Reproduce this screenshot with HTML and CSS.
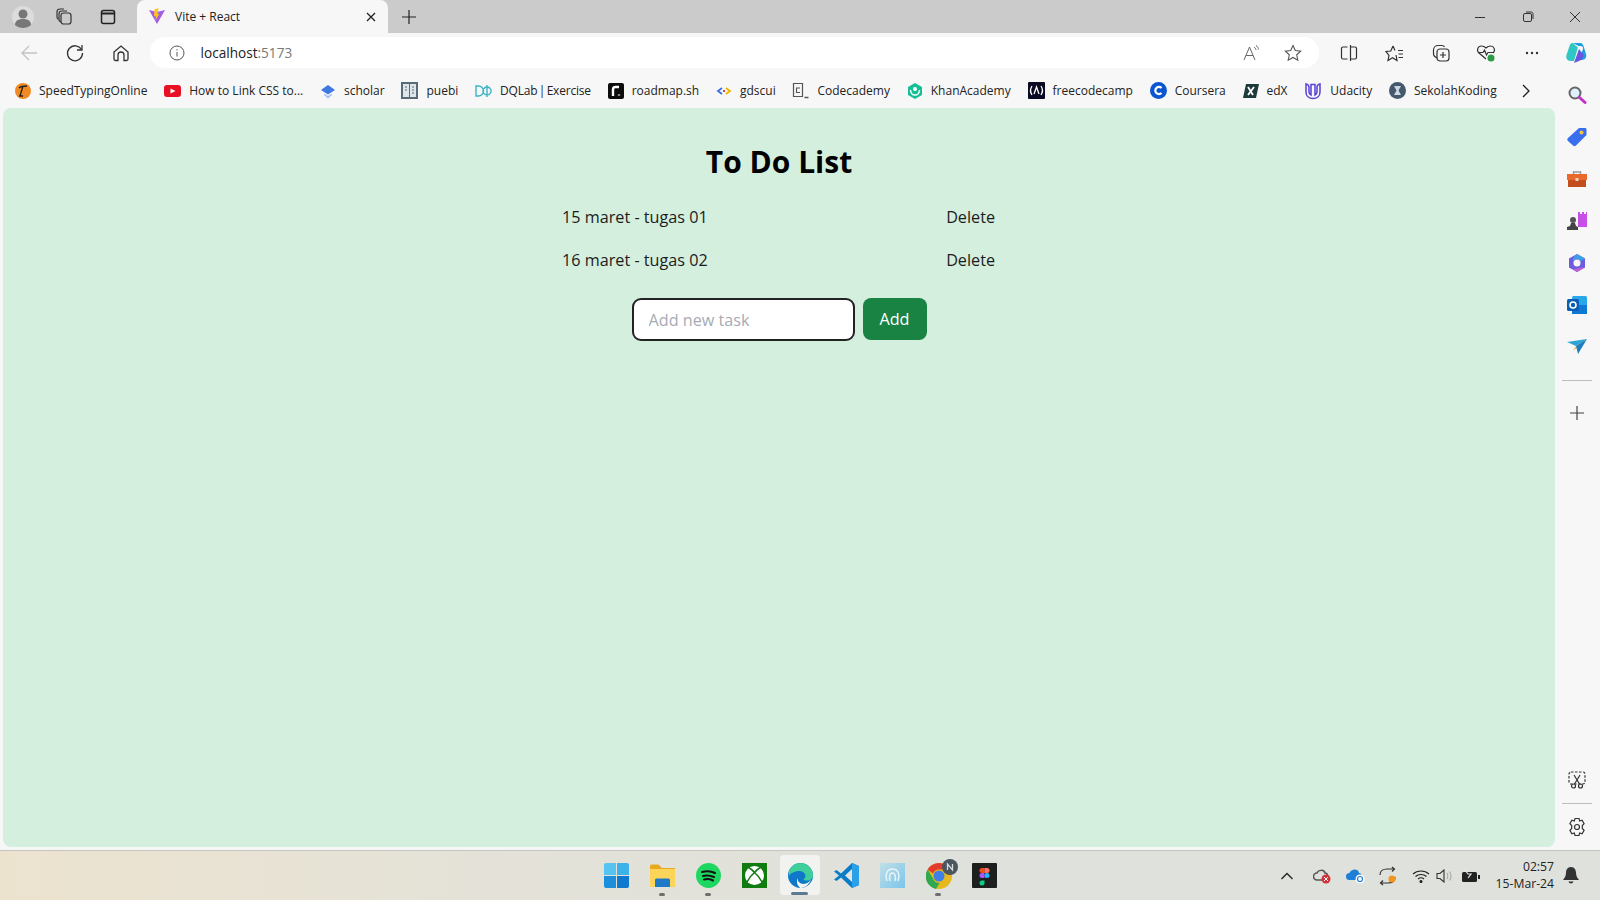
FILE: index.html
```html
<!DOCTYPE html>
<html lang="en">
<head>
<meta charset="utf-8">
<title>Vite + React</title>
<link rel="stylesheet" href="styles.css">
</head>
<body>
<div class="tabstrip">
  <div class="strip-left">
    <span class="profile"><svg width="22" height="22" viewBox="0 0 22 22"><circle cx="11" cy="11" r="11" fill="#dcdcdc"/><circle cx="11" cy="8" r="4.5" fill="#777"/><path d="M3 19c0-4 3-6 8-6s8 2 8 6c-2 2-5 3-8 3s-6-1-8-3z" fill="#777"/></svg></span>
    <span class="strip-btn"><svg width="20" height="20" viewBox="0 0 20 20" fill="none" stroke="#333" stroke-width="1.2"><rect x="7" y="6" width="10" height="11" rx="2.5"/><path d="M7 15c-1.500-.5-2-1-2-2V7c0-2 1-3 3-3h5"/><path d="M4.500 12.500C3.500 12 3 11 3 10V5c0-2 1-3 3-3h4"/></svg></span>
    <span class="strip-btn"><svg width="18" height="18" viewBox="0 0 18 18" fill="none" stroke="#222" stroke-width="1.500"><rect x="2.500" y="2.500" width="13" height="13" rx="2"/><path d="M2.500 5.500h13" stroke-width="2"/></svg></span>
  </div>
  <div class="tab">
    <svg class="tab-icon" width="18" height="17" viewBox="0 0 18 17"><path d="M1 2l8 14 8-14-8 2z" fill="#a45ce8"/><path d="M10.500 0L6.500 1.500 6 8l2 .5-.5 4 4-7-2 .5z" fill="#ffc51f"/></svg>
    <span class="tab-title">Vite + React</span>
    <svg class="tab-close" width="10" height="10" viewBox="0 0 10 10" stroke="#222" stroke-width="1.300"><path d="M1 1l8 8M9 1l-8 8"/></svg>
  </div>
  <span class="newtab"><svg width="16" height="16" viewBox="0 0 16 16" stroke="#222" stroke-width="1.200"><path d="M8 1v14M1 8h14"/></svg></span>
  <div class="win-controls">
    <svg width="12" height="12" viewBox="0 0 12 12" stroke="#333"><path d="M1 6.500h10"/></svg>
    <svg width="12" height="12" viewBox="0 0 12 12" fill="none" stroke="#333"><rect x="1.500" y="2.500" width="8" height="8" rx="1.500"/><path d="M4 1h5c1.500 0 2 1 2 2v5"/></svg>
    <svg width="12" height="12" viewBox="0 0 12 12" stroke="#333"><path d="M1 1l10 10M11 1L1 11"/></svg>
  </div>
</div>

<div class="toolbar">
  <span class="tool-btn"><svg width="20" height="20" viewBox="0 0 20 20" fill="none" stroke="#c4c4c4" stroke-width="1.400"><path d="M18 10H3M10 3l-7 7 7 7"/></svg></span>
  <span class="tool-btn"><svg width="20" height="20" viewBox="0 0 20 20" fill="none" stroke="#333" stroke-width="1.300"><path d="M16.500 6.500A7.500 7.500 0 1 0 17.500 10"/><path d="M17 2v5h-5"/></svg></span>
  <span class="tool-btn"><svg width="20" height="20" viewBox="0 0 20 20" fill="none" stroke="#333" stroke-width="1.300"><path d="M3 9l7-6 7 6v7a1.500 1.500 0 0 1-1.500 1.500H13V12a3 3 0 0 0-6 0v5.500H4.500A1.500 1.500 0 0 1 3 16z"/></svg></span>
  <div class="address">
    <svg width="16" height="16" viewBox="0 0 16 16" fill="none" stroke="#555"><circle cx="8" cy="8" r="7"/><path d="M8 7v4.500M8 4.200v1.300"/></svg>
    <span class="url">localhost<span class="port">:5173</span></span>
    <span class="addr-end">
      <svg width="18" height="18" viewBox="0 0 18 18" fill="none" stroke="#666"><path d="M1 16L6.500 3 12 16M3 11.500h7"/><path d="M11 3c1 .5 2 2 2 3M13 1.500c1.500 1 2.500 2.500 2.500 4"/></svg>
      <svg width="18" height="18" viewBox="0 0 18 18" fill="none" stroke="#555" stroke-width="1.100"><path d="M9 1.500l2.300 5 5.400.6-4 3.700 1.100 5.400L9 13.500l-4.800 2.700 1.100-5.400-4-3.700 5.400-.6z"/></svg>
    </span>
  </div>
  <span class="tool-btn tb-first"><svg width="18" height="18" viewBox="0 0 18 18" fill="none" stroke="#333" stroke-width="1.200"><path d="M7.500 3H3a1.500 1.500 0 0 0-1.500 1.500v9A1.500 1.500 0 0 0 3 15h4.500M10.500 1v16M10.500 3H15a1.500 1.500 0 0 1 1.500 1.500v9A1.500 1.500 0 0 1 15 15h-4.500"/></svg></span>
  <span class="tool-btn"><svg width="19" height="18" viewBox="0 0 19 18" fill="none" stroke="#333" stroke-width="1.200"><path d="M8 2l-2.200 5L1 7.500l3 3.800-1 5.200 4.500-2.700 4.500 2.700-1-5.500M8 2l2 4.500M13 6.500h5M13.500 10h4.500M13.500 13.500H18"/></svg></span>
  <span class="tool-btn"><svg width="18" height="18" viewBox="0 0 18 18" fill="none" stroke="#333" stroke-width="1.200"><rect x="5" y="5" width="12" height="12" rx="3"/><path d="M5 14c-2-1-3.500-2-3.500-4V6c0-2.500 2-4.500 4.500-4.500h4c1 0 2 .5 2.500 1.500M11 8v6M8 11h6"/></svg></span>
  <span class="tool-btn"><svg width="20" height="18" viewBox="0 0 20 18" fill="none" stroke="#333" stroke-width="1.200"><path d="M10 15L3 9C0 6 2 2 5.500 2 8 2 9 3 10 4c1-1 2-2 4.500-2C18 2 20 6 17 9"/><path d="M2 8.500h5l1.500-2.500 2 5 1.500-2.500h5"/><circle cx="15" cy="14" r="3.500" fill="#2c9b45" stroke="none"/></svg></span>
  <span class="tool-btn"><svg width="14" height="4" viewBox="0 0 14 4" fill="#333"><circle cx="2" cy="2" r="1.200"/><circle cx="7" cy="2" r="1.200"/><circle cx="12" cy="2" r="1.200"/></svg></span>
  <span class="tool-btn copilot"><svg width="24" height="24" viewBox="0 0 24 24"><path d="M8 2h7c2 0 3 1 3.500 3L21 13c1 3-1 6-4 6h-3l4-11c.6-2-1-3-2-3l-2.500 0z" fill="#1c9de0"/><path d="M8 2C6 2 5 3 4.500 5L1.500 14c-1 3 1 6 4 6H9l3.500-12c.5-2-.5-3-1.500-3z" fill="#2fc6c4"/><path d="M9 22l5-14 4 5c1 3-1 6-4 7z" fill="#6a55e0"/></svg></span>
</div>

<div class="workarea">
  <div class="browser-main">
    <div class="bookmarks">
      <span class="bm"><svg width="16" height="16" viewBox="0 0 16 16"><circle cx="8" cy="8" r="8" fill="#f08a24"/><path d="M5 13l3-10M4 5c2-2 6-2 8-2M4 13h4" stroke="#222" stroke-width="1.300" fill="none"/></svg>SpeedTypingOnline</span>
      <span class="bm"><svg width="17" height="16" viewBox="0 0 17 16"><rect y="2" width="17" height="12" rx="3" fill="#e81123"/><path d="M6.500 5.500v5L11.500 8z" fill="#fff"/></svg>How to Link CSS to...</span>
      <span class="bm"><svg width="16" height="16" viewBox="0 0 16 16"><path d="M8 2l7 5-7 4.500L1 7z" fill="#3f78e0"/><path d="M4 10.500l4 2.500 4-2.500V12l-4 3.500L4 12z" fill="#9cc0f5"/></svg>scholar</span>
      <span class="bm"><svg width="17" height="17" viewBox="0 0 17 17"><rect width="17" height="17" fill="#5a6b78"/><rect x="2" y="2" width="6" height="13" fill="#dfe6ea"/><rect x="9" y="2" width="6" height="13" fill="#dfe6ea"/><path d="M4 5h2M4 8h2M11 5h2M11 8h2M11 11h2" stroke="#5a6b78" stroke-width="1.200"/></svg>puebi</span>
      <span class="bm bm-tight"><svg width="17" height="14" viewBox="0 0 17 14" fill="none" stroke="#3bb4c4" stroke-width="1.400"><path d="M1 2h2.500a5 5 0 0 1 0 10H1zM12 3a4 4 0 1 0 0.100 0zM12 1v12"/></svg>DQLab | Exercise</span>
      <span class="bm"><svg width="16" height="16" viewBox="0 0 16 16"><rect width="16" height="16" rx="2" fill="#0c0c0c"/><path d="M5 13V6.500C5 5 6 4 7.500 4H11M11 11.500v1" stroke="#fff" stroke-width="2.400" fill="none"/></svg>roadmap.sh</span>
      <span class="bm"><svg width="16" height="16" viewBox="0 0 16 16" fill="none" stroke-width="1.800"><path d="M6 5L2 8l4 3" stroke="#3b6fe0"/><path d="M10 5l4 3-4 3" stroke="#f0b400"/><path d="M7 8h2" stroke="#e04030"/></svg>gdscui</span>
      <span class="bm"><svg width="17" height="17" viewBox="0 0 17 17" fill="none" stroke="#555" stroke-width="1.200"><path d="M1.500 1.500h9v13h-9z"/><path d="M8 6H4.500v4.500H8" stroke-width="1.100"/><path d="M12.500 15.500h4" stroke-width="1.500"/></svg>Codecademy</span>
      <span class="bm"><svg width="16" height="16" viewBox="0 0 16 16"><path d="M8 0l7 4v8l-7 4-7-4V4z" fill="#14bf96"/><circle cx="8" cy="6" r="2" fill="#fff"/><path d="M3.500 7c0 3 2 5 4.500 5s4.500-2 4.500-5" fill="none" stroke="#fff" stroke-width="1.500"/></svg>KhanAcademy</span>
      <span class="bm"><svg width="17" height="17" viewBox="0 0 17 17"><rect width="17" height="17" rx="1" fill="#0a0a23"/><path d="M4 4C2 7 2 10 4 13M13 4c2 3 2 6 0 9M6 12l2.500-7L11 12" stroke="#fff" stroke-width="1.300" fill="none"/></svg>freecodecamp</span>
      <span class="bm"><svg width="17" height="17" viewBox="0 0 17 17"><circle cx="8.500" cy="8.500" r="8.500" fill="#0a56d2"/><path d="M11.500 6a3.600 3.600 0 1 0 0 5" stroke="#fff" stroke-width="2.200" fill="none"/></svg>Coursera</span>
      <span class="bm"><svg width="16" height="16" viewBox="0 0 16 16"><path d="M3 1h13l-3 14H0z" fill="#1d3b3b"/><path d="M5 4l5 8M11 4L5 12" stroke="#fff" stroke-width="1.800"/></svg>edX</span>
      <span class="bm"><svg width="18" height="18" viewBox="0 0 18 18" fill="none" stroke="#5a3fd8" stroke-width="1.500"><path d="M2 2v8c0 4 3 6.500 7 6.500s7-2.500 7-6.500V2c-2 .5-3 1-3 3v5c0 1.500-1 2.500-2 3V2.500H7V13c-1-.5-2-1.500-2-3V5c0-2-1-2.500-3-3z"/></svg>Udacity</span>
      <span class="bm"><svg width="17" height="17" viewBox="0 0 17 17"><circle cx="8.500" cy="8.500" r="8.500" fill="#44596e"/><path d="M5 4h7l-2.500 4.500L12 13H5l2.500-4.500z" fill="#cfd8e0"/></svg>SekolahKoding</span>
      <span class="bm-more"><svg width="10" height="14" viewBox="0 0 10 14" fill="none" stroke="#222" stroke-width="1.300"><path d="M2 1l6 6-6 6"/></svg></span>
    </div>
    <main class="page">
      <h1 class="page-title">To Do List</h1>
      <ul class="tasks">
        <li class="task"><span>15 maret - tugas 01</span><span class="delete">Delete</span></li>
        <li class="task"><span>16 maret - tugas 02</span><span class="delete">Delete</span></li>
      </ul>
      <form class="add-form">
        <input class="add-input" type="text" placeholder="Add new task">
        <button class="add-btn" type="button">Add</button>
      </form>
    </main>
  </div>
  <aside class="sidebar">
    <div class="side-top">
      <span class="side-icon"><svg width="20" height="20" viewBox="0 0 20 20"><circle cx="8" cy="8" r="5.500" fill="#dff0fa" stroke="#666" stroke-width="2"/><path d="M12.500 12.500l5.500 5" stroke="#c330c8" stroke-width="3" stroke-linecap="round"/></svg></span>
      <span class="side-icon"><svg width="20" height="20" viewBox="0 0 20 20"><path d="M12 1h6c1 0 1.500.5 1.500 1.500V8L9 18.500c-1 1-2 1-3 0L1 14c-1-1-1-2 0-3z" fill="#3a6ef0"/><circle cx="14.500" cy="5.500" r="2" fill="#f4c542"/></svg></span>
      <span class="side-icon"><svg width="20" height="18" viewBox="0 0 20 18"><path d="M6.500 4V2h7v2" fill="none" stroke="#999" stroke-width="1.500"/><rect y="4" width="20" height="6" fill="#ea6a2c"/><rect x="1" y="10" width="18" height="7" fill="#c24e1d"/><rect x="8.500" y="8" width="3" height="3" fill="#f2d6b8"/></svg></span>
      <span class="side-icon"><svg width="20" height="20" viewBox="0 0 20 20"><path d="M11 1h2v2h2V1h2v2h2V1h1v15h-9z" fill="#c74fe8"/><circle cx="6" cy="9" r="3" fill="#555"/><path d="M4 12h4l1 3 2 1v3H0v-3l3-1z" fill="#444"/></svg></span>
      <span class="side-icon"><svg width="20" height="20" viewBox="0 0 20 20"><path d="M10 1l8 4.500v9L10 19l-8-4.500v-9z" fill="#6d5ce0"/><path d="M10 1l8 4.500-4 2.500-4-2.500-4 2.500V5z" fill="#3aa0e8"/><path d="M18 14.500L10 19l-4-2.500 8-2z" fill="#c060d8"/><circle cx="10" cy="10" r="3.500" fill="#f7f7f7"/></svg></span>
      <span class="side-icon"><svg width="20" height="20" viewBox="0 0 20 20"><rect x="5" y="1" width="15" height="18" rx="1.500" fill="#28a8ea"/><rect x="5" y="10" width="15" height="9" fill="#0f78d4"/><rect y="4" width="12" height="12" rx="1.500" fill="#0a5fb4"/><circle cx="6" cy="10" r="3" fill="none" stroke="#fff" stroke-width="1.600"/></svg></span>
      <span class="side-icon"><svg width="20" height="16" viewBox="0 0 20 16"><path d="M0 3l20-3-11 7z" fill="#2aa6d8"/><path d="M20 0L9 7l-3 5z" fill="#f0b73a"/><path d="M9 7l2 8 9-15z" fill="#1e7fc0"/></svg></span>
      <span class="side-rule"></span>
      <span class="side-icon"><svg width="14" height="14" viewBox="0 0 14 14" stroke="#444" stroke-width="1.200"><path d="M7 0v14M0 7h14"/></svg></span>
    </div>
    <div class="side-bottom">
      <span class="side-icon"><svg width="20" height="18" viewBox="0 0 20 18" fill="none" stroke="#333" stroke-width="1.200"><rect x="2" y="1" width="16" height="12" rx="2" stroke-dasharray="2.500 1.500"/><path d="M7 4l5.500 9M13 4l-5.500 9"/><circle cx="6.500" cy="15" r="2"/><circle cx="13.500" cy="15" r="2"/></svg></span>
      <span class="side-rule"></span>
      <span class="side-icon"><svg width="20" height="20" viewBox="0 0 20 20" fill="none" stroke="#333" stroke-width="1.200"><path d="M8 1.500h4l.7 2.500 2.400-.8 2 3.400L15.300 8.500v3l1.800 1.900-2 3.400-2.400-.8-.7 2.500H8l-.7-2.500-2.400.8-2-3.400 1.800-1.900v-3L2.900 6.600l2-3.400 2.400.8z"/><circle cx="10" cy="10" r="2.500"/></svg></span>
    </div>
  </aside>
</div>

<footer class="taskbar">
  <div class="task-apps">
    <span class="app"><svg width="25" height="25" viewBox="0 0 25 25"><path d="M0 2a2 2 0 0 1 2-2h10v12H0z" fill="#55c4f0"/><path d="M13 0h10a2 2 0 0 1 2 2v10H13z" fill="#3db1ea"/><path d="M0 13h12v12H2a2 2 0 0 1-2-2z" fill="#1b8fdc"/><path d="M13 13h12v10a2 2 0 0 1-2 2H13z" fill="#0f78cf"/></svg></span>
    <span class="app running"><svg width="25" height="23" viewBox="0 0 25 23"><path d="M0 2a1.500 1.500 0 0 1 1.500-1.500h7L12 4h13v19H0z" fill="#e9a91f"/><path d="M0 5h25v18H0z" fill="#fbd45a"/><path d="M5 16a1.500 1.500 0 0 1 1.500-1.500h12a1.500 1.500 0 0 1 1.500 1.500v7H5z" fill="#1e78c8"/></svg></span>
    <span class="app running"><svg width="25" height="25" viewBox="0 0 25 25" fill="none"><circle cx="12.500" cy="12.500" r="12.500" fill="#1ed760"/><path d="M6 9c4-1 9-1 13 1M7 13c3.500-1 7-.7 11 1M8 16.500c3-.7 6-.5 9 1" stroke="#111" stroke-width="2" stroke-linecap="round"/></svg></span>
    <span class="app"><svg width="25" height="25" viewBox="0 0 25 25"><rect width="25" height="25" fill="#107c10"/><circle cx="12.500" cy="12.500" r="9.500" fill="#fff"/><path d="M6.500 4.500c2 1 4.500 3 6 5 1.500-2 4-4 6-5M5 19c2-4 5-7.500 7.500-9.500M20 19c-2-4-5-7.500-7.500-9.500" fill="none" stroke="#107c10" stroke-width="1.600"/></svg></span>
    <span class="app active"><svg width="25" height="25" viewBox="0 0 25 25"><circle cx="12.500" cy="12.500" r="12.500" fill="#0f78c8"/><path d="M1 8C3 3 7.500 0 12.500 0 19 0 25 5 25 12c0 4-3 5.500-6 5.500-2 0-3-.5-3.500-1.500 2-1 2.500-3 1.500-5-1.500-2.500-4-3.500-7-3C7 8.500 3 9.500 1 13z" fill="#3fcf9a"/><path d="M9.500 15c0 4.500 4 7 8.500 5.500 2.500-1 4-2.500 5-4-2 6-7 8.500-11 8.500 1 0-3-2-3-6 0-2 0-3 .5-4z" fill="#f2f3f1"/></svg><span class="app-bar"></span></span>
    <span class="app"><svg width="25" height="25" viewBox="0 0 25 25"><path d="M18 0l7 3v19l-7 3L7 14.500l-4.500 3.500L0 16.500 5 12.500 0 8.500 2.500 7 7 10.500z" fill="#0a7cc8"/><path d="M18 6v13l-7-6.500z" fill="#e4e5e0"/><path d="M18 0l7 3v19l-7 3z" fill="#2aa0e8"/></svg></span>
    <span class="app"><svg width="25" height="25" viewBox="0 0 25 25"><defs><linearGradient id="ag" x1="0" y1="0" x2="1" y2="1"><stop offset="0" stop-color="#bfe0e8"/><stop offset="1" stop-color="#7cc4ea"/></linearGradient></defs><rect width="25" height="25" fill="url(#ag)"/><path d="M7 18c-2-5-1-12 5.500-12S20 13 18 18M10 18c-1-3-.5-8 2.500-8s3.500 5 2.500 8" fill="none" stroke="#e8f4f8" stroke-width="1.500"/></svg></span>
    <span class="app running"><svg class="chrome" width="34" height="30" viewBox="0 0 34 30"><circle cx="13" cy="17" r="13" fill="#e8b91c"/><path d="M13 4a13 13 0 0 1 11.300 6.500H13a6.500 6.500 0 0 0-6 4L1.700 10.500A13 13 0 0 1 13 4z" fill="#e33b2e"/><path d="M1.700 10.500L7.500 20.500a6.500 6.500 0 0 0 6 3.500L10 30A13 13 0 0 1 1.700 10.500z" fill="#2fa84f"/><circle cx="13" cy="17" r="5.500" fill="#3f7fe8"/><circle cx="24" cy="8" r="8" fill="#4a5560"/><path d="M21.500 11V5l5 6V5" fill="none" stroke="#d8dde0" stroke-width="1.300"/></svg></span>
    <span class="app"><svg width="25" height="25" viewBox="0 0 25 25"><rect width="25" height="25" rx="1" fill="#1e1e1e"/><circle cx="15" cy="12.500" r="2.500" fill="#1abcfe"/><path d="M10 17.500h2.500V20a2.500 2.500 0 1 1-2.500-2.500z" fill="#0acf83"/><path d="M12.500 10H10a2.500 2.500 0 0 1 0-5h2.500z" fill="#f24e1e"/><path d="M12.500 5H15a2.500 2.500 0 0 1 0 5h-2.500z" fill="#ff7262"/><path d="M12.500 10v5H10a2.500 2.500 0 0 1 0-5z" fill="#a259ff"/></svg></span>
  </div>
  <div class="tray">
    <span class="tray-icons">
      <svg class="t-chev" width="14" height="8" viewBox="0 0 14 8" fill="none" stroke="#222" stroke-width="1.300"><path d="M1.500 7L7 1.500 12.500 7"/></svg>
      <svg width="20" height="16" viewBox="0 0 20 16"><path d="M4 12a3.500 3.500 0 0 1 0-7C5 2 11 1 12 5c3 0 3.500 4 2 7z" fill="none" stroke="#555" stroke-width="1.500"/><circle cx="13" cy="11" r="4.500" fill="#d13438"/><path d="M11 9l4 4M15 9l-4 4" stroke="#fff"/></svg>
      <svg width="20" height="16" viewBox="0 0 20 16"><path d="M3.500 12a3.500 3.500 0 0 1 0-7C5 1 12 0 13 5c3 0 4 4 2 7z" fill="#1f7fd8"/><circle cx="14" cy="11" r="4.500" fill="#fff"/><circle cx="14" cy="11" r="2.500" fill="none" stroke="#1f7fd8" stroke-width="1.200"/></svg>
      <svg width="20" height="20" viewBox="0 0 20 20" fill="none" stroke="#333" stroke-width="1.200"><path d="M1 9C1 5 4 3 8 3h7M13 1l2.500 2L13 5.500M16 11c0 4-3 6-7 6H2M4 14.500L1.500 17 4 19"/><circle cx="13" cy="13" r="3.500" fill="#f0951e" stroke="none"/></svg>
      <svg class="t-wifi" width="18" height="14" viewBox="0 0 18 14" fill="none" stroke="#222" stroke-width="1.100"><path d="M1 5c4.500-4 11.500-4 16 0M3.500 7.500c3-2.700 8-2.700 11 0M6 10c1.800-1.500 4.200-1.500 6 0"/><circle cx="9" cy="12.500" r="1" fill="#222"/></svg>
      <svg class="t-vol" width="18" height="14" viewBox="0 0 18 14" fill="none" stroke="#333" stroke-width="1.100"><path d="M1 4.500h3L8 1v12L4 9.500H1z"/><path d="M11 4c1 1.500 1 4.500 0 6M13.500 2.500c2 2.500 2 6.500 0 9" stroke="#aaa"/></svg>
      <svg class="t-bat" width="20" height="14" viewBox="0 0 20 14"><rect x="1" y="3" width="15" height="10" rx="1.500" fill="#222"/><rect x="17" y="6" width="2" height="4" fill="#222"/><path d="M3 0l4 5 3 0-3 4" fill="none" stroke="#e6e6e2" stroke-width="1.200"/></svg>
    </span>
    <span class="clock"><span>02:57</span><span>15-Mar-24</span></span>
    <svg class="bell" width="16" height="18" viewBox="0 0 16 18" fill="#333"><path d="M8 0C4.500 0 3 3 3 6c0 3-1.500 5-3 7h16c-1.500-2-3-4-3-7 0-3-1.500-6-5-6z"/><path d="M5.500 14.500h5C10 17 6 17 5.500 14.500z"/></svg>
  </div>
</footer>
</body>
</html>
```

FILE: styles.css
```css
* { box-sizing: border-box; }
html, body { margin: 0; padding: 0; }
body {
  width: 1600px;
  height: 900px;
  overflow: hidden;
  display: flex;
  flex-direction: column;
  background: #f7f7f7;
  font-family: "Open Sans", "Noto Sans", sans-serif;
  color: #1c1c1c;
}
svg { flex: none; display: block; }

.tabstrip {
  height: 33px;
  background: #cbcbcb;
  display: flex;
  align-items: center;
  flex: none;
}
.strip-left { display: flex; align-items: center; width: 137px; padding-left: 12px; }
.profile { width: 22px; display: flex; }
.strip-btn { width: 44px; display: flex; justify-content: center; }
.strip-btn:nth-child(2) { margin-left: 8px; }
.tab {
  width: 251px;
  height: 33px;
  background: #f7f7f7;
  border-radius: 8px 8px 0 0;
  display: flex;
  align-items: center;
  padding: 0 12px 0 11px;
}
.tab-icon { margin-right: 9px; margin-top: -1px; }
.tab-title { flex: 1; font-size: 12px; color: #222; }
.newtab { margin-left: 13px; }
.win-controls {
  margin-left: auto;
  width: 144px;
  padding: 0 19px 0 18px;
  display: flex;
  justify-content: space-between;
  align-items: center;
}

.toolbar {
  height: 40px;
  flex: none;
  display: flex;
  align-items: center;
  padding-left: 6px;
}
.tool-btn { width: 46px; height: 30px; display: flex; align-items: center; justify-content: center; }
.address {
  width: 1173px;
  height: 31px;
  margin-left: 6px;
  margin-top: -1px;
  background: #fff;
  border-radius: 16px;
  display: flex;
  align-items: center;
  padding-left: 19px;
}
.url { margin-left: 16px; font-size: 13.600px; color: #222; }
.port { color: #777; }
.addr-end { margin-left: auto; display: flex; gap: 23px; padding-right: 17px; }
.tb-first { margin-left: 7px; }
.copilot { margin-left: -1px; }

.workarea { flex: 1; display: flex; min-height: 0; }
.browser-main { width: 1555px; display: flex; flex-direction: column; padding-bottom: 3px; }
.bookmarks {
  height: 35px;
  flex: none;
  display: flex;
  align-items: center;
  gap: 16.800px;
  padding-left: 15px;
  font-size: 12px;
  color: #222;
}
.bm { display: flex; align-items: center; gap: 8px; white-space: nowrap; }
.bm-tight { word-spacing: -1.500px; letter-spacing: -0.200px; }
.bm-more { margin-left: 8px; }
.page {
  flex: 1;
  margin-left: 3px;
  background: #d5efdf;
  border-radius: 8px;
  display: flex;
  flex-direction: column;
  align-items: center;
  padding-top: 32px;
}
.page-title {
  margin: 0;
  font-size: 30px;
  line-height: 44px;
  font-weight: 700;
  color: #000;
}
.tasks {
  list-style: none;
  margin: 11px 0 0;
  padding: 0 8px 0 7px;
  width: 448px;
  font-size: 16.200px;
  color: #1c1c1c;
}
.task {
  display: flex;
  height: 43px;
  align-items: center;
}
.task > span:first-child { width: 393px; }
.add-form { display: flex; gap: 8px; margin-top: 17px; }
.add-input {
  width: 223px;
  height: 43px;
  border: 2px solid #222;
  border-radius: 9px;
  padding: 0 15px;
  font: inherit;
  font-size: 16.200px;
  background: #fff;
}
.add-input::placeholder { color: #a6abb4; }
.add-btn {
  width: 64px;
  height: 42px;
  border: 0;
  border-radius: 8px;
  background: #198344;
  color: #fff;
  font: inherit;
  font-size: 16.200px;
}

.sidebar {
  width: 45px;
  display: flex;
  flex-direction: column;
  justify-content: space-between;
  align-items: center;
  padding: 1px 2px 2px 0;
}
.side-top, .side-bottom { display: flex; flex-direction: column; align-items: center; width: 100%; }
.side-icon { height: 42px; display: flex; align-items: center; justify-content: center; }
.side-rule { width: 30px; height: 1px; background: #bdbdbd; flex: none; }
.side-top .side-rule { margin: 12px 0 11px; }
.side-bottom .side-rule { margin: 2px 0; }

.taskbar {
  height: 50px;
  flex: none;
  display: flex;
  align-items: center;
  border-top: 1px solid #c4c4c0;
  background: linear-gradient(90deg, #ece3cf 0%, #e4e2d8 30%, #dfe1dc 60%, #dfe1dc 100%);
}
.task-apps {
  display: flex;
  margin-left: 593px;
  height: 49px;
}
.app {
  width: 46px;
  height: 49px;
  display: flex;
  align-items: center;
  justify-content: center;
  position: relative;
}
.app.running::after {
  content: "";
  position: absolute;
  left: 20px;
  bottom: 4px;
  width: 6px;
  height: 3px;
  border-radius: 2px;
  background: #6e6e6e;
}
.app.active {
  width: 40px;
  height: 40px;
  margin: 4px 3px 0;
  background: #f2f3f1;
  border-radius: 4px;
}
.app-bar {
  position: absolute;
  left: 11px;
  bottom: 0;
  width: 17px;
  height: 3px;
  border-radius: 2px;
  background: #5d7a92;
}
.chrome { margin-left: 9px; margin-top: -4px; }
.tray {
  margin-left: auto;
  display: flex;
  align-items: center;
  padding-right: 21px;
}
.tray-icons { display: flex; align-items: center; gap: 13px; }
.t-chev { margin-right: 6px; }
.t-vol { margin-left: -7px; }
.t-bat { margin-left: -6px; }
.clock {
  display: flex;
  flex-direction: column;
  align-items: flex-end;
  font-size: 12.200px;
  line-height: 17px;
  color: #222;
  margin-left: 15px;
  margin-right: 9px;
  margin-top: -2px;
}
```
